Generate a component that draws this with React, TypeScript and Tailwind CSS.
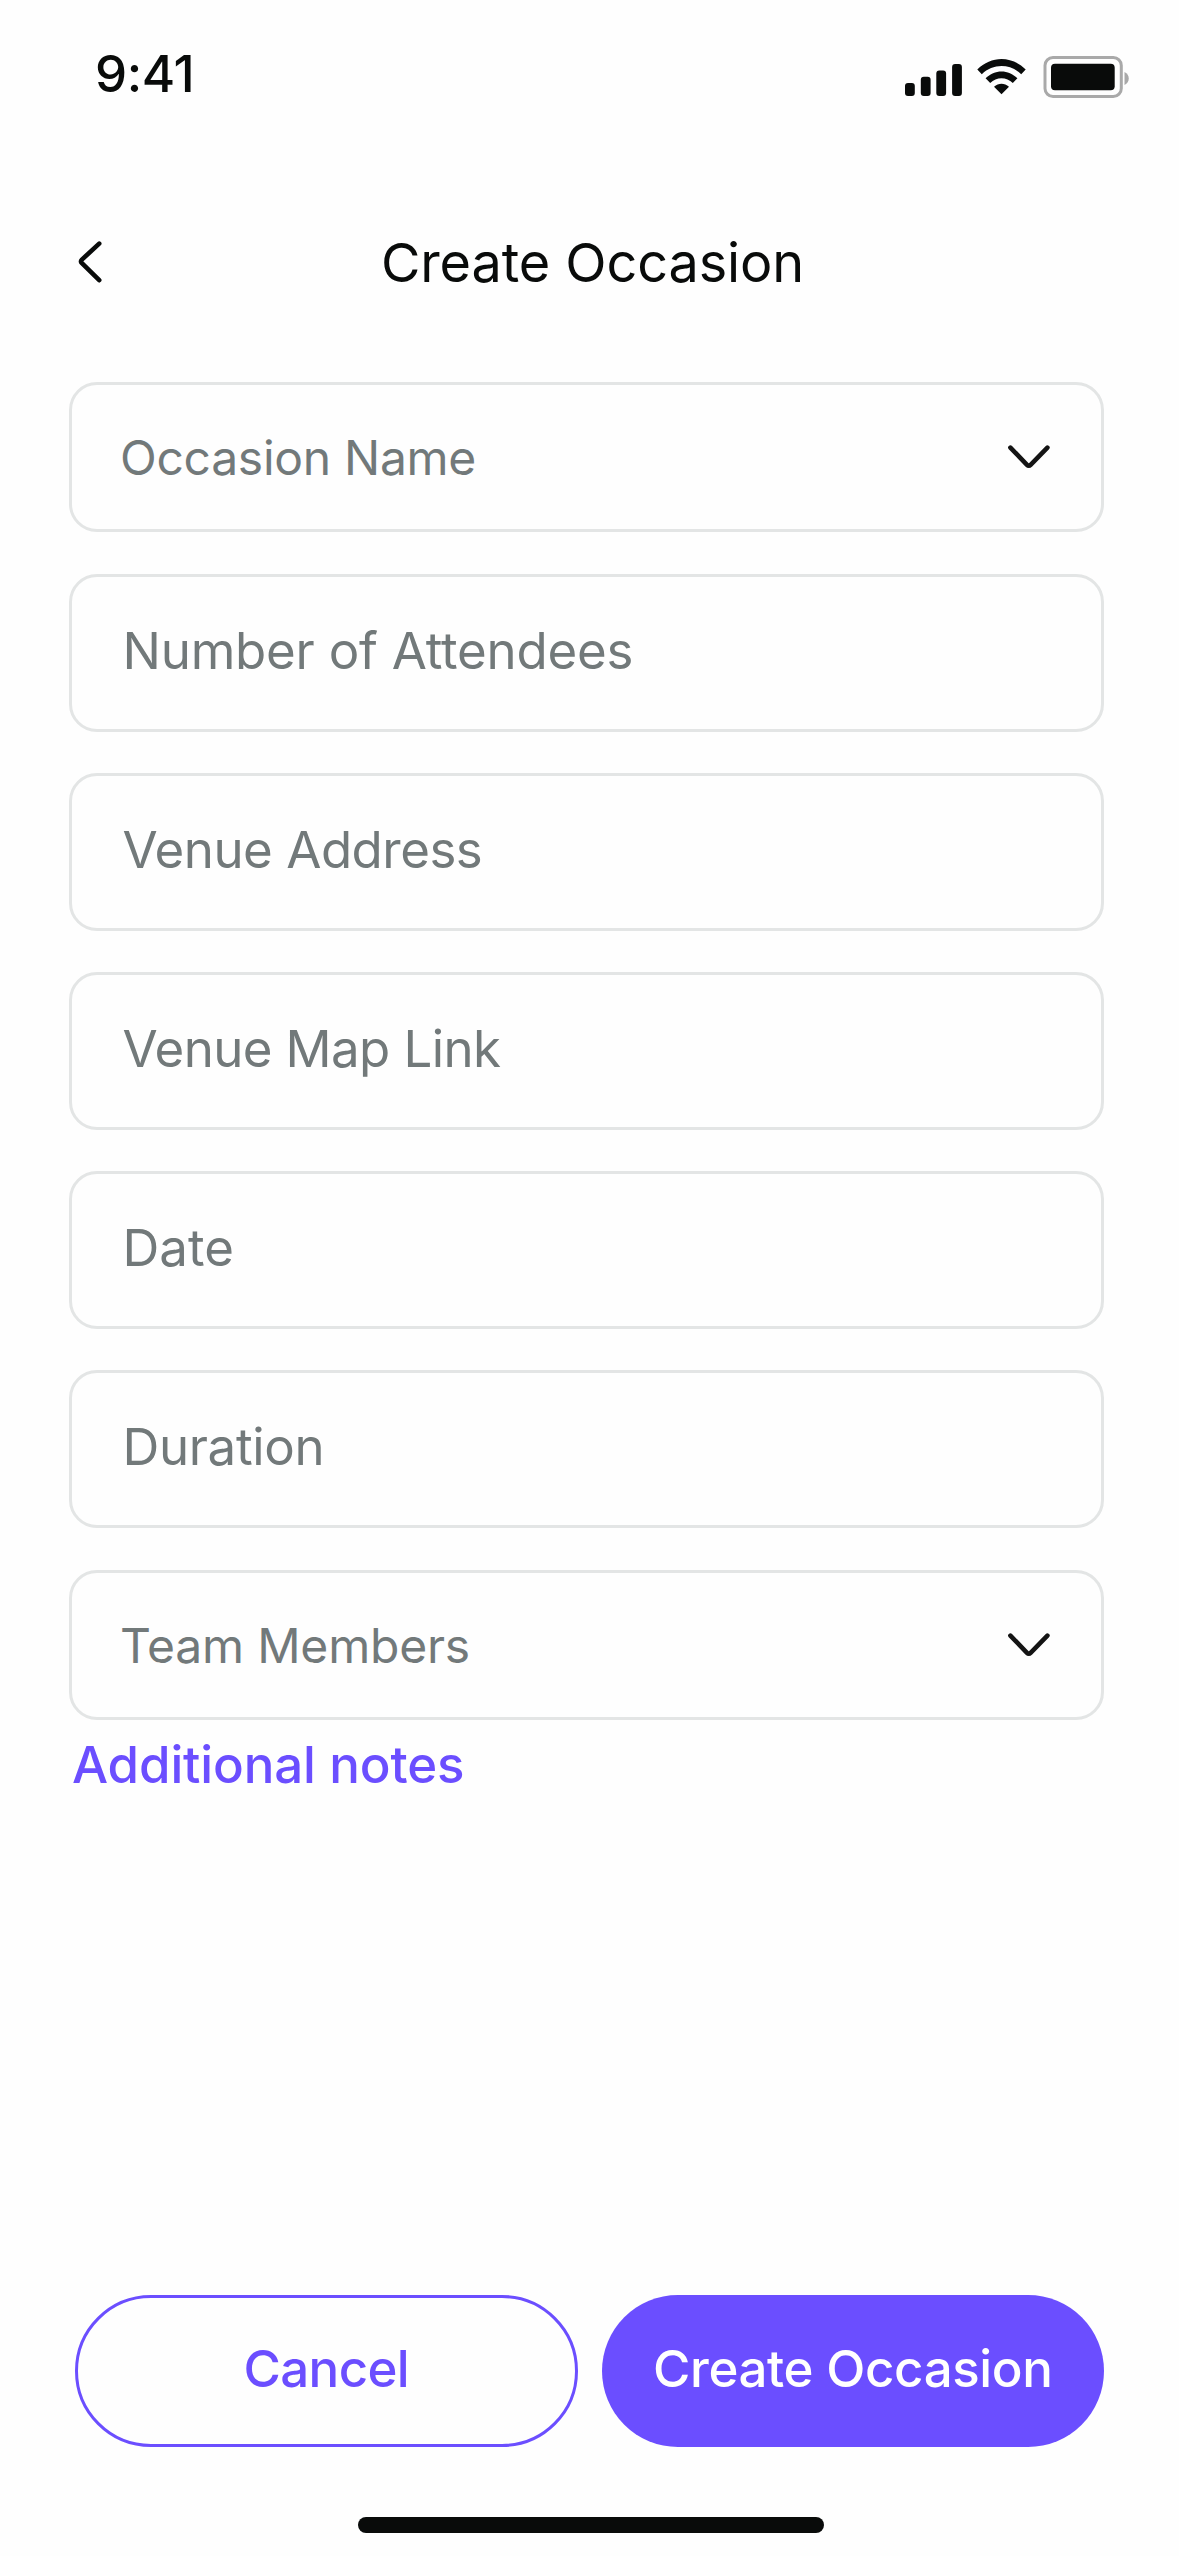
import React from "react";

type FieldProps = { label: string; tracking: string; select?: boolean; className?: string };

function StatusBar() {
  return (
    <div className="flex h-[147px] items-start justify-between pl-[95px] pr-[50px]">
      <span className="mt-[43px] text-[51px] font-medium leading-[61px] tracking-[-0.4px]">9:41</span>
      <svg className="mt-[50px]" width="226" height="54" viewBox="903 50 226 54">
        <g fill="#090b0a">
          <rect x="905" y="83" width="9.8" height="13" rx="3" />
          <rect x="920.8" y="76.7" width="9.8" height="19.3" rx="3" />
          <rect x="936.3" y="70.4" width="9.8" height="25.6" rx="3" />
          <rect x="952.1" y="64" width="9.8" height="32" rx="3" />
          <path d="M977.3 69.6C991 55.5 1012 55.5 1025.7 69.6L1021.2 74.2C1010 63.3 993 63.3 981.8 74.2Z" />
          <path d="M985.6 78.3C994.4 69.1 1008.6 69.1 1017.4 78.3L1012.8 82.9C1006.6 76.6 996.4 76.6 990.2 82.9Z" />
          <path d="M994 86.7C998.6 82.8 1004.4 82.8 1009 86.7L1001.5 94.3Z" />
          <rect x="1051" y="63.7" width="63.7" height="26.5" rx="4" />
        </g>
        <rect x="1045" y="57.5" width="76.3" height="39" rx="8" fill="none" stroke="#a9a9a9" strokeWidth="3" />
        <path d="M1124.5 72C1130.2 74.5 1130.2 82.5 1124.5 85Z" fill="#a9a9a9" />
      </svg>
    </div>
  );
}

function Header() {
  return (
    <header className="grid h-[235px] grid-cols-[1fr_auto_1fr] items-start">
      <button aria-label="Back" className="ml-[76px] mt-[91px] w-[28px]">
        <svg width="28" height="48" viewBox="0 0 28 48" fill="none" stroke="#090b0a" strokeWidth="4.6" strokeLinecap="round" strokeLinejoin="round">
          <path d="M23.2 5.6L5.9 21.6Q4.2 23.4 5.9 25.2L23.2 42.2" />
        </svg>
      </button>
      <h1 className="ml-[6px] mt-[84px] text-[54px] leading-[64px] tracking-[-0.1px]">Create Occasion</h1>
      <span />
    </header>
  );
}

function Field({ label, tracking, select, className = "" }: FieldProps) {
  return (
    <div
      className={`flex items-center justify-between rounded-[28px] border-[3px] border-[#e3e5e5] text-[#72797a] ${
        select ? "h-[150px] pl-[48px] pr-[49px] text-[48px]" : "h-[158px] pb-[5px] pl-[50.5px] text-[51px]"
      } ${className}`}
    >
      <span className={`leading-none ${select ? "pt-[2px]" : ""} ${tracking}`}>{label}</span>
      {select && (
        <svg width="46" height="28" viewBox="0 0 46 28" fill="none" stroke="#141414" strokeWidth="4.6" strokeLinecap="round" strokeLinejoin="round">
          <path d="M4.4 4.6L21 21.8Q22.8 23.6 24.6 21.8L41.4 4.6" />
        </svg>
      )}
    </div>
  );
}

export default function App() {
  return (
    <main className="flex h-[2556px] w-[1179px] flex-col bg-[#fefefe] font-['Inter',sans-serif] text-[#090b0a]">
      <StatusBar />
      <Header />
      <form className="flex flex-col gap-[41px] pl-[69px] pr-[75px]">
        <Field label="Occasion Name" tracking="tracking-[-0.28px]" select className="mb-px" />
        <Field label="Number of Attendees" tracking="tracking-[-0.22px]" />
        <Field label="Venue Address" tracking="tracking-[-0.5px]" />
        <Field label="Venue Map Link" tracking="tracking-[-0.6px]" />
        <Field label="Date" tracking="tracking-[0px]" />
        <Field label="Duration" tracking="tracking-[-0.35px]" />
        <Field label="Team Members" tracking="tracking-[-0.2px]" select className="mt-px" />
      </form>
      <a className="ml-[72px] mt-[15px] text-[51px] font-medium leading-[60px] tracking-[-0.14px] text-[#6b4eff]">Additional notes</a>
      <div className="mt-auto flex gap-6 pl-[75px]">
        <button className="flex h-[152px] w-[502.5px] items-center justify-center rounded-full border-[3px] border-[#6b4eff] pb-[5px] text-[51px] font-medium leading-none tracking-[-0.6px] text-[#6b4eff]">
          Cancel
        </button>
        <button className="flex h-[152px] w-[502.5px] items-center justify-center whitespace-nowrap rounded-full bg-[#6b4eff] pb-[5px] text-[51px] font-medium leading-none tracking-[-0.38px] text-white">
          Create Occasion
        </button>
      </div>
      <div className="mb-[23px] ml-[358px] mt-[70px] h-4 w-[466px] rounded-full bg-[#090b0a]" />
    </main>
  );
}
